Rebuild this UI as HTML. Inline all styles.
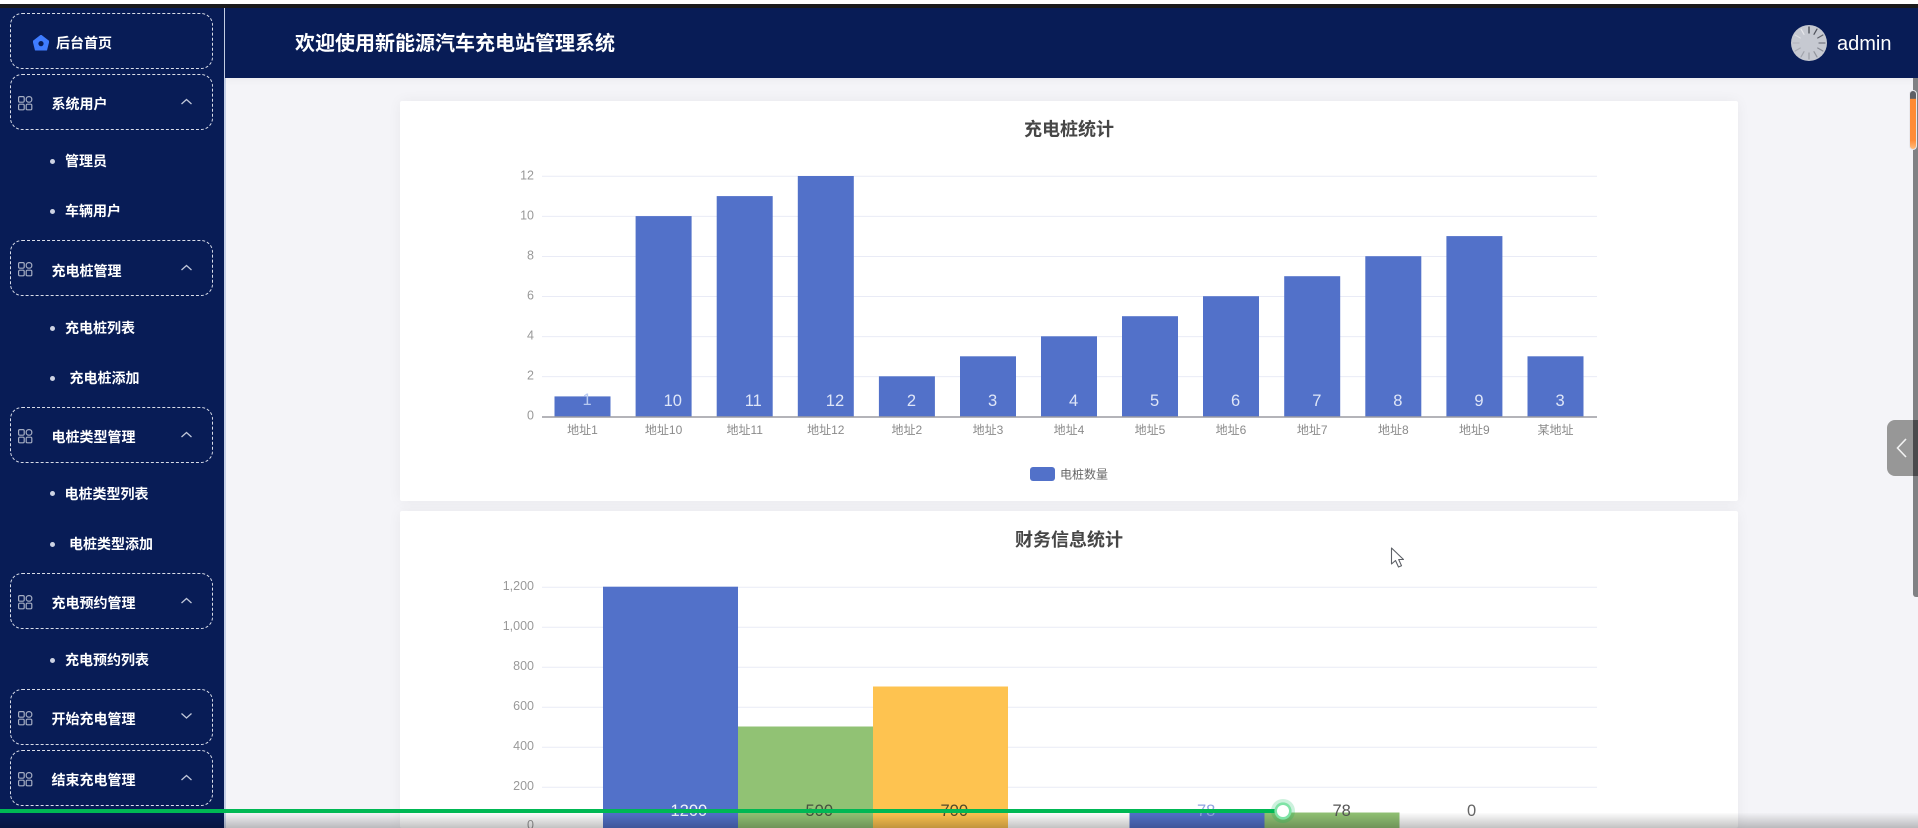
<!DOCTYPE html>
<html lang="zh">
<head>
<meta charset="utf-8">
<title>新能源汽车充电站管理系统</title>
<style>
html,body{margin:0;padding:0;width:1918px;height:828px;overflow:hidden;background:#f4f4f8;font-family:"Liberation Sans","Noto Sans CJK SC",sans-serif}
div{box-sizing:border-box}
#root{position:relative;width:1918px;height:828px;overflow:hidden;background:#f4f4f8;filter:blur(.35px)}
.abs{position:absolute}
#topw{position:absolute;left:0;top:0;width:1918px;height:4px;background:#fff}
#topd{position:absolute;left:0;top:4px;width:1918px;height:4px;background:#1a1a1c}
#side{position:absolute;left:0;top:8px;width:224px;height:820px;background:#081c56}
#sline{position:absolute;left:224px;top:8px;width:1.5px;height:820px;background:#c6d0e6}
#head{position:absolute;left:225px;top:8px;width:1693px;height:70px;background:#081c56;box-shadow:0 2px 8px rgba(0,0,0,.04)}
#title{position:absolute;left:295px;top:29px;line-height:30px;font-size:20px;font-weight:700;color:#fff;white-space:nowrap}
#admin{position:absolute;left:1837px;top:29px;line-height:30px;font-size:20px;color:#fff}
.box{position:absolute;left:10px;width:203px;height:56px;border:1px dashed #d9dde9;border-radius:12px}
.mt{position:absolute;left:51.5px;line-height:20px;font-size:14px;font-weight:700;color:#fff;white-space:nowrap}
.st{position:absolute;line-height:20px;font-size:14px;font-weight:700;color:#fff;white-space:nowrap}
.dot{position:absolute;left:49.5px;width:5px;height:5px;border-radius:50%;background:#cdd3e3}
.card{position:absolute;left:400px;width:1338px;background:#fff;border-radius:2px;box-shadow:0 0 14px rgba(0,0,0,.05)}
#track{position:absolute;left:1913px;top:78px;width:5px;height:519px;background:#808184;border-radius:0 0 0 3px}
#thumb{position:absolute;left:1909px;top:90px;width:8px;height:60px;border-radius:4px;background:linear-gradient(#5f6065 0,#5f6065 13%,#ff8a32 14%,#ff8c38 85%,#ffbd7e 100%);border:1px solid #e9e9ee}
#tab{position:absolute;left:1887px;top:420px;width:31px;height:56px;background:#979797;border-radius:8px 0 0 8px}
#tabd{position:absolute;left:1913px;top:420px;width:5px;height:56px;background:#4a4a4c}
#shade{position:absolute;left:0;top:813px;width:1918px;height:15px;background:linear-gradient(rgba(0,0,0,.01),rgba(0,0,0,.24))}
#green{position:absolute;left:0;top:809px;width:1276px;height:4px;background:#00b854}
</style>
</head>
<body>
<div id="root">
<div id="topw"></div>
<div id="topd"></div>
<div id="side"></div>
<div id="sline"></div>
<div id="head"></div>
<div id="title">欢迎使用新能源汽车充电站管理系统</div>

<svg class="abs" style="left:1791px;top:25px" width="36" height="36" viewBox="-18 -18 36 36">
<circle r="18" fill="#c6c9d1"/>
<g stroke-width="1.2" stroke-linecap="round">
<line x1="0" y1="-10" x2="0" y2="-16" stroke="#3c3f48"/>
<line x1="5" y1="-8.7" x2="8" y2="-13.9" stroke="#50535c"/>
<line x1="8.7" y1="-5" x2="13.9" y2="-8" stroke="#5f626b"/>
<line x1="10" y1="0" x2="16" y2="0" stroke="#767982"/>
<line x1="8.7" y1="5" x2="13.9" y2="8" stroke="#868992"/>
<line x1="5" y1="8.7" x2="8" y2="13.9" stroke="#92959d"/>
<line x1="0" y1="10" x2="0" y2="16" stroke="#9b9ea6"/>
<line x1="-5" y1="8.7" x2="-8" y2="13.9" stroke="#a2a5ad"/>
<line x1="-8.7" y1="5" x2="-13.9" y2="8" stroke="#a9acb4"/>
<line x1="-10" y1="0" x2="-16" y2="0" stroke="#b6b9c1"/>
<line x1="-8.7" y1="-5" x2="-13.9" y2="-8" stroke="#dcdee3"/>
<line x1="-5" y1="-8.7" x2="-8" y2="-13.9" stroke="#e6e7eb"/>
</g>
</svg>
<div id="admin">admin</div>

<!-- sidebar boxes -->
<div class="box" style="top:13px"></div>
<div class="box" style="top:74px"></div>
<div class="box" style="top:240px"></div>
<div class="box" style="top:406.5px"></div>
<div class="box" style="top:573px"></div>
<div class="box" style="top:689px"></div>
<div class="box" style="top:750px"></div>

<svg class="abs" style="left:33px;top:35px" width="16" height="16" viewBox="0 0 16 16">
<path d="M8 .2 15.8 6.2 13.6 15 2.4 15 .2 6.2Z" fill="#3f7cff" stroke="#3f7cff" stroke-linejoin="round"/>
<circle cx="8" cy="8.6" r="2.6" fill="#081c56"/>
</svg>
<div class="mt" style="left:56px;top:33px">后台首页</div>

<svg class="abs" style="left:0;top:0" width="224" height="828" viewBox="0 0 224 828">
<defs>
<g id="gi" fill="none" stroke="#a5adc2" stroke-width="1.2">
<rect x="18.6" y="0.6" width="5.6" height="5.6" rx="1.2"/>
<rect x="26.2" y="0.6" width="5.6" height="5.6" rx="2.6"/>
<rect x="18.6" y="8.2" width="5.6" height="5.6" rx="1.2"/>
<rect x="26.2" y="8.2" width="5.6" height="5.6" rx="1.2"/>
</g>
</defs>
<use href="#gi" y="96"/>
<use href="#gi" y="262"/>
<use href="#gi" y="429"/>
<use href="#gi" y="595"/>
<use href="#gi" y="711"/>
<use href="#gi" y="772"/>
<g fill="none" stroke="#c0c7d9" stroke-width="1.3">
<path d="M181.5 104 186.5 99.5 191.5 104"/>
<path d="M181.5 270 186.5 265.5 191.5 270"/>
<path d="M181.5 437 186.5 432.5 191.5 437"/>
<path d="M181.5 603 186.5 598.5 191.5 603"/>
<path d="M181.5 713.5 186.5 718 191.5 713.5"/>
<path d="M181.5 780 186.5 775.5 191.5 780"/>
</g>
</svg>

<div class="mt" style="top:94px">系统用户</div>
<div class="mt" style="top:261px">充电桩管理</div>
<div class="mt" style="top:427px">电桩类型管理</div>
<div class="mt" style="top:593px">充电预约管理</div>
<div class="mt" style="top:709px">开始充电管理</div>
<div class="mt" style="top:770px">结束充电管理</div>

<div class="dot" style="top:159px"></div><div class="st" style="left:65px;top:151px">管理员</div>
<div class="dot" style="top:209px"></div><div class="st" style="left:65px;top:201px">车辆用户</div>
<div class="dot" style="top:325.5px"></div><div class="st" style="left:65px;top:318px">充电桩列表</div>
<div class="dot" style="top:375.5px"></div><div class="st" style="left:69.5px;top:368px">充电桩添加</div>
<div class="dot" style="top:491px"></div><div class="st" style="left:64.5px;top:484px">电桩类型列表</div>
<div class="dot" style="top:541.5px"></div><div class="st" style="left:69px;top:534px">电桩类型添加</div>
<div class="dot" style="top:658px"></div><div class="st" style="left:65px;top:650px">充电预约列表</div>

<!-- cards -->
<div class="card" style="top:101px;height:400px"></div>
<div class="card" style="top:511px;height:317px"></div>

<!-- charts -->
<svg class="abs" style="left:0;top:0" width="1918" height="828" viewBox="0 0 1918 828" font-family="'Liberation Sans','Noto Sans CJK SC',sans-serif">
<g stroke="#e9ebf6" stroke-width="1">
<line x1="542" x2="1597" y1="176.3" y2="176.3"/>
<line x1="542" x2="1597" y1="216.4" y2="216.4"/>
<line x1="542" x2="1597" y1="256.5" y2="256.5"/>
<line x1="542" x2="1597" y1="296.5" y2="296.5"/>
<line x1="542" x2="1597" y1="336.6" y2="336.6"/>
<line x1="542" x2="1597" y1="376.6" y2="376.6"/>
<line x1="542" x2="1597" y1="587.3" y2="587.3"/>
<line x1="542" x2="1597" y1="627.3" y2="627.3"/>
<line x1="542" x2="1597" y1="667.3" y2="667.3"/>
<line x1="542" x2="1597" y1="707.3" y2="707.3"/>
<line x1="542" x2="1597" y1="747.3" y2="747.3"/>
<line x1="542" x2="1597" y1="787.3" y2="787.3"/>
</g>
<g fill="#5271c9">
<rect x="554.5" y="396.4" width="56" height="20.3"/>
<rect x="635.6" y="216.1" width="56" height="200.6"/>
<rect x="716.7" y="196.1" width="56" height="220.6"/>
<rect x="797.8" y="176" width="56" height="240.7"/>
<rect x="878.9" y="376.3" width="56" height="40.4"/>
<rect x="960" y="356.3" width="56" height="60.4"/>
<rect x="1041" y="336.3" width="56" height="80.4"/>
<rect x="1122" y="316.2" width="56" height="100.5"/>
<rect x="1203" y="296.2" width="56" height="120.5"/>
<rect x="1284.2" y="276.2" width="56" height="140.5"/>
<rect x="1365.3" y="256.2" width="56" height="160.5"/>
<rect x="1446.4" y="236.1" width="56" height="180.6"/>
<rect x="1527.5" y="356.3" width="56" height="60.4"/>
</g>
<line x1="542" x2="1597" y1="417" y2="417" stroke="#9c9ca2" stroke-width="1.4"/>
<g font-size="16.5" fill="#dfe6f7">
<text x="582.5" y="405" fill="#b7c9f0">1</text>
<text x="663.6" y="406">10</text>
<text x="744.7" y="406">11</text>
<text x="825.8" y="406">12</text>
<text x="906.9" y="406">2</text>
<text x="988" y="406">3</text>
<text x="1069" y="406">4</text>
<text x="1150" y="406">5</text>
<text x="1231" y="406">6</text>
<text x="1312.2" y="406">7</text>
<text x="1393.3" y="406">8</text>
<text x="1474.4" y="406">9</text>
<text x="1555.5" y="406">3</text>
</g>
<g font-size="12.5" fill="#999" text-anchor="end">
<text x="534" y="179.5">12</text>
<text x="534" y="219.5">10</text>
<text x="534" y="259.5">8</text>
<text x="534" y="299.5">6</text>
<text x="534" y="339.5">4</text>
<text x="534" y="379.5">2</text>
<text x="534" y="419.5">0</text>
<text x="534" y="590">1,200</text>
<text x="534" y="630">1,000</text>
<text x="534" y="670">800</text>
<text x="534" y="710">600</text>
<text x="534" y="750">400</text>
<text x="534" y="790">200</text>
<text x="534" y="829">0</text>
</g>
<g font-size="12" fill="#8b8b8b" text-anchor="middle">
<text x="582.5" y="434">地址1</text>
<text x="663.6" y="434">地址10</text>
<text x="744.7" y="434">地址11</text>
<text x="825.8" y="434">地址12</text>
<text x="906.9" y="434">地址2</text>
<text x="988" y="434">地址3</text>
<text x="1069" y="434">地址4</text>
<text x="1150" y="434">地址5</text>
<text x="1231" y="434">地址6</text>
<text x="1312.2" y="434">地址7</text>
<text x="1393.3" y="434">地址8</text>
<text x="1474.4" y="434">地址9</text>
<text x="1555.5" y="434">某地址</text>
</g>
<text x="1069" y="135.5" font-size="18" font-weight="700" fill="#464646" text-anchor="middle">充电桩统计</text>
<rect x="1030" y="467" width="25" height="14" rx="3" fill="#5271c9"/>
<text x="1060" y="478.5" font-size="12" fill="#666">电桩数量</text>
<text x="1069" y="546" font-size="18" font-weight="700" fill="#464646" text-anchor="middle">财务信息统计</text>
<rect x="603" y="586.7" width="135" height="241.3" fill="#5271c9"/>
<rect x="738" y="726.5" width="135" height="101.5" fill="#91c274"/>
<rect x="873" y="686.5" width="135" height="141.5" fill="#fec350"/>
<rect x="1129.5" y="812.5" width="135" height="15.5" fill="#5271c9"/>
<rect x="1264.5" y="812.5" width="135" height="15.5" fill="#91c274"/>
<g font-size="16.5">
<text x="670.5" y="816" fill="#eef2fb">1200</text>
<text x="805.5" y="816" fill="#47513f">500</text>
<text x="940.5" y="816" fill="#55492a">700</text>
<text x="1197" y="816" fill="#8fa3e0">78</text>
<text x="1332.5" y="816" fill="#555">78</text>
<text x="1467" y="816" fill="#666">0</text>
</g>
</svg>

<div id="track"></div>
<div id="thumb"></div>
<div id="tab"></div>
<div id="tabd"></div>
<svg class="abs" style="left:1894px;top:436px" width="16" height="24" viewBox="0 0 16 24">
<path d="M12 3 3.5 12 12 21" fill="none" stroke="#f2f2f2" stroke-width="1.6"/>
</svg>

<!-- cursor -->
<svg class="abs" style="left:1390px;top:547px" width="16" height="22" viewBox="0 0 16 22">
<path d="M1.5 1V17L5.5 13.5 8.5 20 11.5 18.7 8.7 12.5H13.5Z" fill="#fff" stroke="#5d6066" stroke-width="1.1" stroke-linejoin="round"/>
</svg>

<!-- video player overlay -->
<div id="shade"></div>
<div id="green"></div>
<svg class="abs" style="left:1269px;top:797px" width="28" height="28" viewBox="0 0 28 28">
<circle cx="14" cy="14" r="12" fill="#00b854" fill-opacity=".2"/>
<circle cx="14" cy="14" r="8.6" fill="#7fe3a6"/>
<circle cx="14" cy="14" r="6" fill="#fff"/>
</svg>
</div>
</body>
</html>
